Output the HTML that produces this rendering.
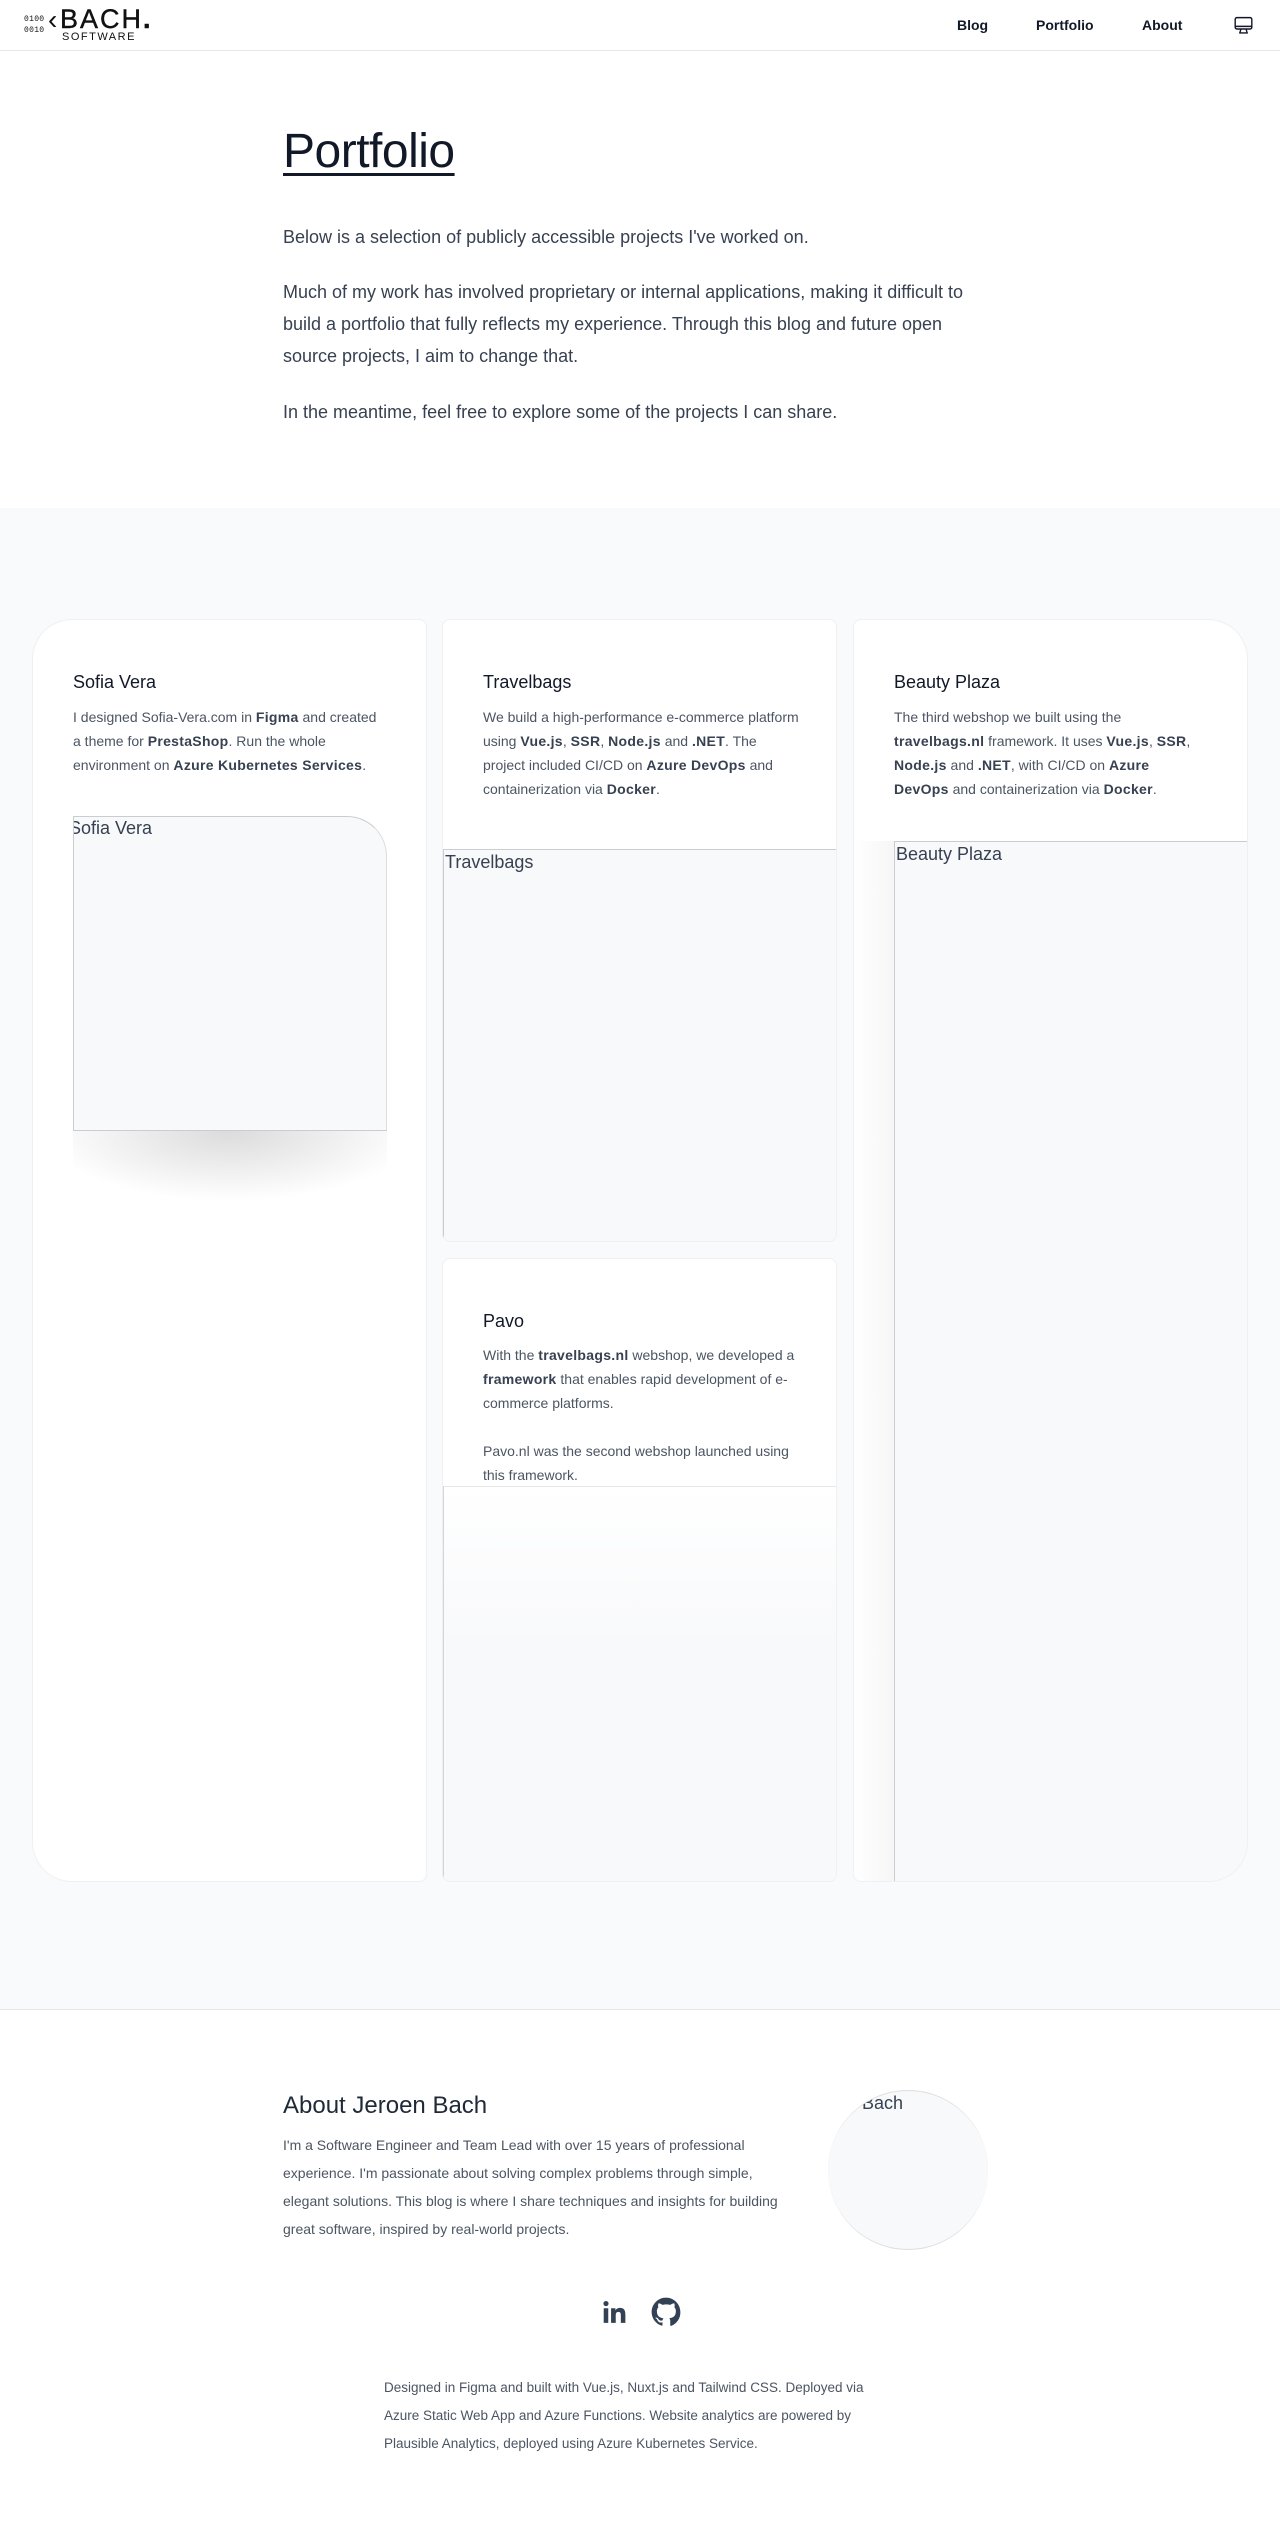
<!DOCTYPE html>
<html><head><meta charset="utf-8">
<style>
*{margin:0;padding:0;box-sizing:border-box}
body{width:1280px;height:2538px;background:#fff;font-family:"Liberation Sans",sans-serif;color:#374151;position:relative;overflow:hidden}
.abs{position:absolute}
header{position:absolute;left:0;top:0;width:1280px;height:51px;border-bottom:1px solid #e5e7eb;background:#fff}
.nav{position:absolute;top:17px;font-size:14px;font-weight:bold;color:#111827}
h1{position:absolute;left:283px;top:124px;font-size:48px;font-weight:normal;color:#111827;text-decoration:underline;text-decoration-thickness:3px;text-underline-offset:6px;letter-spacing:-0.5px}
.p{position:absolute;left:283px;width:690px;font-size:18px;line-height:32px;color:#374151}
.gray{position:absolute;left:0;top:508px;width:1280px;height:502px;background:#f9fafb}
.gray2{position:absolute;left:0;top:1010px;width:1280px;height:1000px;background:#f9fafb;border-bottom:1px solid #e5e7eb}
.card{position:absolute;background:#fff;border:1px solid #eef0f3;overflow:hidden}
.ct{position:absolute;font-size:18px;color:#111827}
.cx{position:absolute;font-size:14px;line-height:24px;color:#4b5563}
.cx b{color:#374151;letter-spacing:0.3px}
.img{position:absolute;background:#f8f9fb;border:1px solid #c9ccd1;font-size:18px;color:#374151;overflow:hidden;white-space:nowrap}
</style></head><body>
<header>
  <div class="abs" style="left:24px;top:14px;font-size:8px;line-height:11px;color:#111;font-family:'Liberation Mono',monospace;letter-spacing:0.3px">0100<br>0010</div>
  <div class="abs" style="left:48px;top:4px;font-size:28px;color:#111;font-weight:300">&#x2039;</div>
  <div class="abs" style="left:60px;top:4px;font-size:27px;letter-spacing:2px;color:#111;-webkit-text-stroke:0.4px #111">BACH<span style="font-weight:bold">.</span></div>
  <div class="abs" style="left:62px;top:31px;font-size:11px;letter-spacing:1.5px;color:#111">SOFTWARE</div>
  <div class="nav" style="left:957px">Blog</div>
  <div class="nav" style="left:1036px">Portfolio</div>
  <div class="nav" style="left:1142px">About</div>
  <svg class="abs" style="left:1233px;top:15px" width="21" height="21" viewBox="0 0 24 24" fill="none" stroke="#111827" stroke-width="1.6"><rect x="2.5" y="3" width="19" height="13" rx="2"/><path d="M2.5 13h19M9 16l-1 4M15 16l1 4M7 20.5h10"/></svg>
</header>

<h1>Portfolio</h1>
<div class="p" style="top:221px">Below is a selection of publicly accessible projects I've worked on.</div>
<div class="p" style="top:276px">Much of my work has involved proprietary or internal applications, making it difficult to build a portfolio that fully reflects my experience. Through this blog and future open source projects, I aim to change that.</div>
<div class="p" style="top:396px">In the meantime, feel free to explore some of the projects I can share.</div>

<div class="gray"></div>
<div class="gray2"></div>

<div class="card" style="left:32px;top:619px;width:395px;height:1263px;border-radius:40px 8px 8px 40px">
  <div class="ct" style="left:40px;top:52px">Sofia Vera</div>
  <div class="cx" style="left:40px;top:85px;width:308px">I designed Sofia-Vera.com in <b>Figma</b> and created a theme for <b>PrestaShop</b>. Run the whole environment on <b>Azure Kubernetes Services</b>.</div>
  <div class="abs" style="left:40px;top:511px;width:314px;height:70px;background:radial-gradient(ellipse 60% 100% at 50% 0%,rgba(0,0,0,0.14),rgba(0,0,0,0) 100%)"></div>
  <div class="img" style="left:40px;top:196px;width:314px;height:315px;border-radius:0 40px 0 0;border-right-color:#ddd"><span style="margin-left:-5px;position:relative;top:1px">Sofia Vera</span></div>
</div>

<div class="card" style="left:442px;top:619px;width:395px;height:623px;border-radius:8px">
  <div class="ct" style="left:40px;top:52px">Travelbags</div>
  <div class="cx" style="left:40px;top:85px;width:318px">We build a high-performance e-commerce platform using <b>Vue.js</b>, <b>SSR</b>, <b>Node.js</b> and <b>.NET</b>. The project included CI/CD on <b>Azure DevOps</b> and containerization via <b>Docker</b>.</div>
  <div class="img" style="left:0;top:229px;width:394px;height:393px"><span style="margin-left:1px;position:relative;top:2px">Travelbags</span></div>
</div>

<div class="card" style="left:442px;top:1258px;width:395px;height:624px;border-radius:8px">
  <div class="ct" style="left:40px;top:52px">Pavo</div>
  <div class="cx" style="left:40px;top:84px;width:312px">With the <b>travelbags.nl</b> webshop, we developed a <b>framework</b> that enables rapid development of e-commerce platforms.<br><br>Pavo.nl was the second webshop launched using this framework.</div>
  <div class="abs" style="left:0;top:227px;width:395px;height:397px;border-top:1px solid #e5e7eb;border-left:1px solid #d1d5db;border-right:1px solid #e5e7eb;border-bottom:2px solid #e5e7eb;background:linear-gradient(#fff 0%,#f8f9fb 40%,#f8f9fb 100%)"></div>
</div>

<div class="card" style="left:853px;top:619px;width:395px;height:1263px;border-radius:8px 40px 40px 8px">
  <div class="ct" style="left:40px;top:52px">Beauty Plaza</div>
  <div class="cx" style="left:40px;top:85px;width:310px">The third webshop we built using the <b>travelbags.nl</b> framework. It uses <b>Vue.js</b>, <b>SSR</b>, <b>Node.js</b> and <b>.NET</b>, with CI/CD on <b>Azure DevOps</b> and containerization via <b>Docker</b>.</div>
  <div class="abs" style="left:0;top:221px;width:40px;height:1042px;background:linear-gradient(90deg,rgba(0,0,0,0) 0%,rgba(0,0,0,0.035) 100%)"></div>
  <div class="img" style="left:40px;top:221px;width:356px;height:1042px;border-right-color:#bbb"><span style="margin-left:1px;position:relative;top:2px">Beauty Plaza</span></div>
</div>

<div class="abs" style="left:283px;top:2092px;font-size:24px;color:#1f2937">About Jeroen Bach</div>
<div class="abs" style="left:283px;top:2131px;width:500px;font-size:14px;line-height:28px;color:#4b5563">I'm a Software Engineer and Team Lead with over 15 years of professional experience. I'm passionate about solving complex problems through simple, elegant solutions. This blog is where I share techniques and insights for building great software, inspired by real-world projects.</div>
<div class="abs" style="left:828px;top:2090px;width:160px;height:160px;border-radius:50%;background:#f8f9fb;overflow:hidden;border-top:1px solid #ddd;border-bottom:1px solid #ddd"><div style="position:absolute;left:-26px;top:2px;font-size:18px;color:#374151;white-space:nowrap">Jeroen Bach</div></div>

<svg class="abs" style="left:601px;top:2299px" width="26" height="26" viewBox="0 0 24 24" fill="#334155"><path d="M2.5 8.5h4.2V22H2.5zM4.6 1.8a2.4 2.4 0 110 4.8 2.4 2.4 0 010-4.8zM9.3 8.5h4v1.9h.1c.6-1.1 2-2.2 4-2.2 4.3 0 5.1 2.8 5.1 6.5V22h-4.2v-6.5c0-1.6 0-3.6-2.2-3.6s-2.5 1.7-2.5 3.5V22H9.3z"/></svg>
<svg class="abs" style="left:651px;top:2297px" width="30" height="30" viewBox="0 0 24 24" fill="#334155"><path d="M12 .5C5.7.5.5 5.7.5 12c0 5.1 3.3 9.4 7.9 10.9.6.1.8-.2.8-.6v-2c-3.2.7-3.9-1.5-3.9-1.5-.5-1.3-1.3-1.7-1.3-1.7-1.1-.7.1-.7.1-.7 1.2.1 1.8 1.2 1.8 1.2 1 1.8 2.7 1.3 3.4 1 .1-.8.4-1.3.7-1.6-2.6-.3-5.3-1.3-5.3-5.7 0-1.3.5-2.3 1.2-3.1-.1-.3-.5-1.5.1-3.1 0 0 1-.3 3.3 1.2a11.5 11.5 0 016 0c2.3-1.5 3.3-1.2 3.3-1.2.7 1.6.2 2.8.1 3.1.8.8 1.2 1.8 1.2 3.1 0 4.4-2.7 5.4-5.3 5.7.4.4.8 1.1.8 2.2v3.3c0 .3.2.7.8.6A11.5 11.5 0 0023.5 12C23.5 5.7 18.3.5 12 .5z"/></svg>

<div class="abs" style="left:384px;top:2374px;width:500px;font-size:13.5px;line-height:28px;color:#4b5563">Designed in Figma and built with Vue.js, Nuxt.js and Tailwind CSS. Deployed via Azure Static Web App and Azure Functions. Website analytics are powered by Plausible Analytics, deployed using Azure Kubernetes Service.</div>
</body></html>
